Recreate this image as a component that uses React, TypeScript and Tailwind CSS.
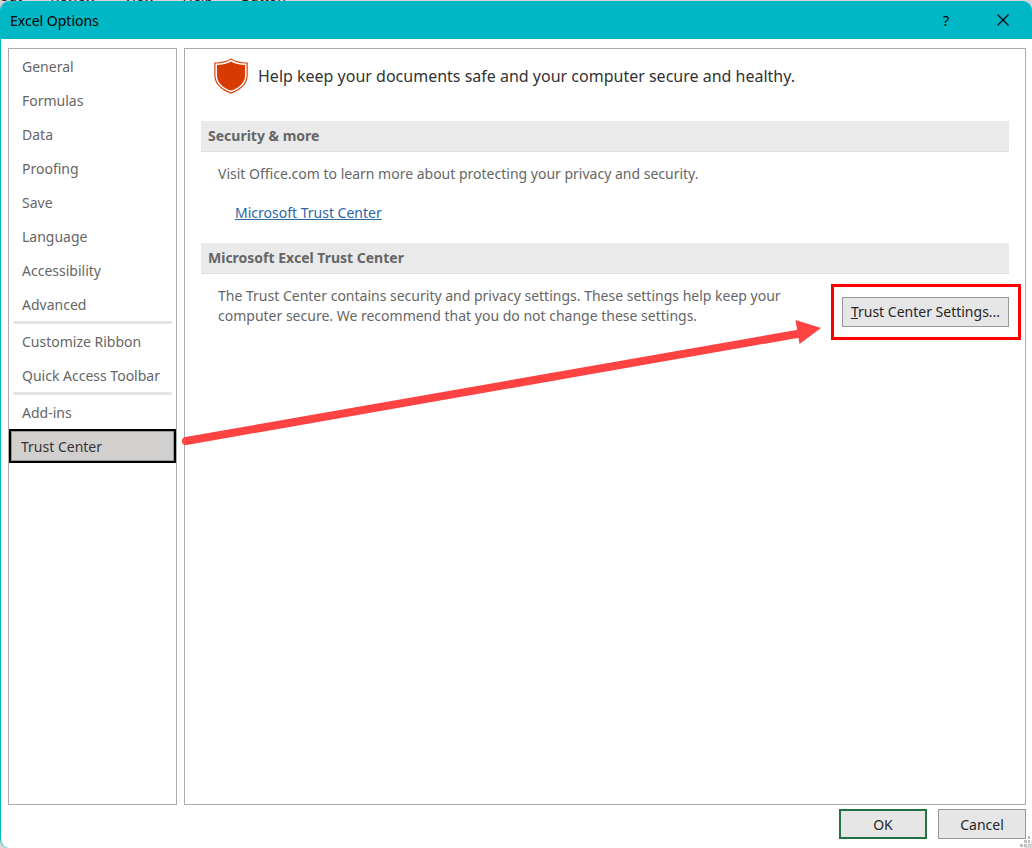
import React from "react";

const groups = [
  ["General", "Formulas", "Data", "Proofing", "Save", "Language", "Accessibility", "Advanced"],
  ["Customize Ribbon", "Quick Access Toolbar"],
  ["Add-ins", "Trust Center"],
];

function Shield() {
  return (
    <svg className="h-9 w-[34px] shrink-0" viewBox="0 0 34 36" aria-hidden="true">
      <path
        d="M17 .3C20.500 3 26 4.500 33.700 4.500V17C33.700 26 27 32 17 35.700C7 32 .3 26 .3 17V4.500C8 4.500 13.500 3 17 .3Z"
        fill="#d83b01"
      />
      <path
        d="M17 2.500C21 5 26 6.200 31.800 6.300V17C31.800 25 26 30.300 17 33.500C8 30.300 2.200 25 2.200 17V6.300C8 6.200 13 5 17 2.500Z"
        fill="#d83b01"
        stroke="#fff"
        strokeWidth="1.500"
      />
    </svg>
  );
}

function ResizeGrip() {
  return (
    <svg className="absolute right-0 bottom-0 size-3" viewBox="0 0 12 12" fill="#bfbfbf" aria-hidden="true">
      <path d="M8 0h2v3h-2zM4 4h3v3h-3zM8 4h2v3h-2zM0 8h3v3h-3zM4 8h3v3h-3zM8 8h2v3h-2z" />
    </svg>
  );
}

function SectionTitle({ children }: { children: React.ReactNode }) {
  return (
    <h2 className="h-[31px] border-b border-[#e1e1e1] bg-[#eaeaea] pl-[7px] text-[14px] leading-[29px] font-bold text-[#666]">
      {children}
    </h2>
  );
}

export default function App() {
  return (
    <div className="relative flex h-screen flex-col overflow-hidden bg-[#d6d6d6] font-['Noto_Sans',sans-serif] text-[14px] text-[#666]">
      <div className="flex h-px shrink-0 items-end gap-7 overflow-hidden leading-[11px] text-[#222]">
        <span>out</span>
        <span>Review</span>
        <span>View</span>
        <span>Help</span>
        <span>Button</span>
      </div>
      <div className="relative flex min-h-0 flex-1 flex-col overflow-hidden rounded-[9px] border-l border-[#00b7c6] bg-white">
        <header className="flex h-[38px] shrink-0 items-center bg-[#00b7c6] pl-[9px] text-black">
          <h1 className="flex-1 text-[14px]">Excel Options</h1>
          <button type="button" className="w-14 text-[15px]">?</button>
          <button type="button" aria-label="Close" className="flex w-[58px] justify-center">
            <svg className="size-3" viewBox="0 0 12 12" stroke="#000" strokeWidth="1.200">
              <path d="M.5.5L11.500 11.500M11.500.5L.5 11.500" />
            </svg>
          </button>
        </header>

        <div className="flex min-h-0 flex-1 gap-[7px] pt-[9px] pr-[6px] pl-[7px]">
          <nav className="w-[169px] shrink-0 border border-[#ababab]">
            {groups.map((items, i) => (
              <div key={i}>
                {i > 0 && <hr className="mr-1 ml-1 h-[3px] border-0 bg-[#e5e5e5]" />}
                {items.map((item) =>
                  item === "Trust Center" ? (
                    <button
                      key={item}
                      type="button"
                      aria-current="page"
                      className="block h-[34px] w-full border-2 border-black bg-[#d2d0ce] pl-[10px] text-left text-[#333] outline-1 -outline-offset-3 outline-[#999]"
                    >
                      {item}
                    </button>
                  ) : (
                    <button key={item} type="button" className="block h-[34px] w-full pl-[13px] text-left">
                      {item}
                    </button>
                  ),
                )}
              </div>
            ))}
          </nav>

          <main className="relative min-w-0 flex-1 border border-[#ababab] pt-[9px] pr-4 pl-4">
            <div className="flex h-[63px] items-start gap-[10px] pl-[13px]">
              <Shield />
              <p className="text-[16px] leading-[36px] text-[#333]">
                Help keep your documents safe and your computer secure and healthy.
              </p>
            </div>
            <SectionTitle>Security &amp; more</SectionTitle>
            <div className="h-[91px] pt-3 pl-[17px] leading-5">
              <p>Visit Office.com to learn more about protecting your privacy and security.</p>
              <a href="#trust" className="mt-[19px] ml-[17px] inline-block text-[#2b66a5] underline">
                Microsoft Trust Center
              </a>
            </div>
            <SectionTitle>Microsoft Excel Trust Center</SectionTitle>
            <div className="flex items-start justify-between pt-3 pl-[17px] leading-5">
              <p className="w-[570px]">
                The Trust Center contains security and privacy settings. These settings help keep your computer
                secure. We recommend that you do not change these settings.
              </p>
              <div className="-mt-[2px] -mr-3 shrink-0 border-3 border-[#f00] py-[10px] pr-[9px] pl-2">
                <button type="button" className="block h-[30px] w-[167px] border border-[#999] bg-[#e6e6e6] text-[#262626]">
                  <span className="underline">T</span>rust Center Settings...
                </button>
              </div>
            </div>
            <svg
              className="pointer-events-none absolute top-[268px] -left-1 h-[132px] w-[644px]"
              viewBox="181 317 644 132"
              aria-hidden="true"
            >
              <path d="M186 441L800 333.500" stroke="#ff4343" strokeWidth="8" strokeLinecap="round" />
              <path d="M795.500 320L821 328L799.500 344Z" fill="#ff4343" />
            </svg>
          </main>
        </div>

        <footer className="flex h-[43px] shrink-0 items-start justify-end gap-[11px] pt-1 pr-[6px] text-[#262626]">
          <button type="button" className="h-[30px] w-[88px] border-2 border-[#217346] bg-[#e6e6e6]">OK</button>
          <button type="button" className="h-[30px] w-[88px] border border-[#999] bg-[#e6e6e6]">Cancel</button>
        </footer>
        <ResizeGrip />
      </div>
    </div>
  );
}
